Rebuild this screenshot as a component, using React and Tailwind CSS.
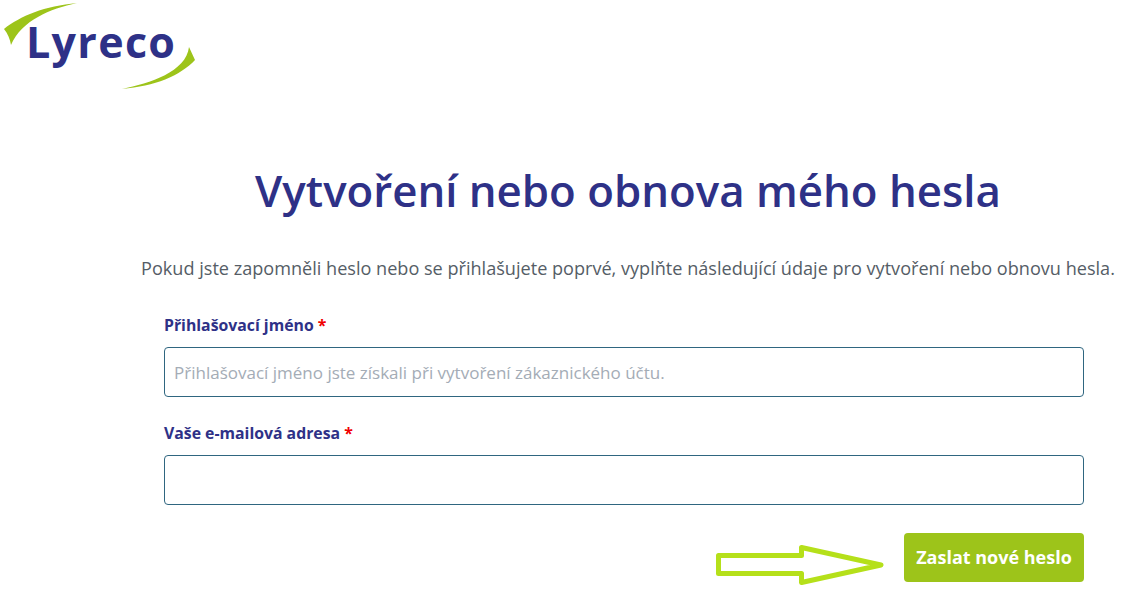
// Lyreco password reset page
const font = { fontFamily: '"Open Sans", sans-serif' };

function Logo() {
  return (
    <svg width="200" height="92" viewBox="0 0 200 92" className="block">
      <path d="M4 29 C20 16 45 6 77 3 C50 9 22 20 11 45 C10 39 8 34 4 29 Z" fill="#9dc41a" />
      <path d="M189 47 L195 60 C180 76 155 86 122 89 C150 83 186 72 189 47 Z" fill="#9dc41a" />
      <text x="26" y="57.5" fontFamily="'Open Sans', sans-serif" fontWeight="750" fontSize="43" letterSpacing="1.3" fill="#2e3187">Lyreco</text>
    </svg>
  );
}

function Arrow() {
  return (
    <svg width="172" height="44" viewBox="0 0 172 44" className="block mt-[10px]">
      <path d="M2.5 12.5 H85.5 V4.5 L165 22 L85.5 39.5 V30.5 H2.5 Z" fill="white" stroke="#b5e01a" strokeWidth="5" strokeLinejoin="round" />
    </svg>
  );
}

function Field({ label, placeholder, className }) {
  return (
    <div className={className}>
      <label className="block text-[15.8px] leading-5 font-bold text-[#2e3187]">
        {label} <span className="text-[#f00000]">*</span>
      </label>
      <input
        placeholder={placeholder}
        className="mt-[12px] block w-full h-[50px] px-[9px] rounded-[4px] border border-[#2f6680] bg-white text-[17px] text-gray-700 outline-none placeholder:text-[#a4acb6]"
      />
    </div>
  );
}

export default function App() {
  return (
    <div className="w-[1123px] h-[598px] overflow-hidden bg-white" style={font}>
      <Logo />
      <main className="flex flex-col items-center pl-[133px]">
        <h1 className="mt-[68px] text-[43.8px] leading-[60px] font-[550] text-[#2e3187] whitespace-nowrap">
          Vytvoření nebo obnova mého hesla
        </h1>
        <p className="mt-[36px] text-[18.1px] leading-6 text-[#555d66] whitespace-nowrap">
          Pokud jste zapomněli heslo nebo se přihlašujete poprvé, vyplňte následující údaje pro vytvoření nebo obnovu hesla.
        </p>
      </main>
      <form className="ml-[164px] w-[920px] mt-[35px]">
        <Field label="Přihlašovací jméno" placeholder="Přihlašovací jméno jste získali při vytvoření zákaznického účtu." />
        <Field label="Vaše e-mailová adresa" className="mt-[26px]" />
        <div className="mt-[28px] flex items-start justify-end">
          <Arrow />
          <button type="button" className="ml-[16px] w-[180px] h-[49px] rounded-[4px] bg-[#9dc41a] text-white text-[18px] font-bold">
            Zaslat nové heslo
          </button>
        </div>
      </form>
    </div>
  );
}
